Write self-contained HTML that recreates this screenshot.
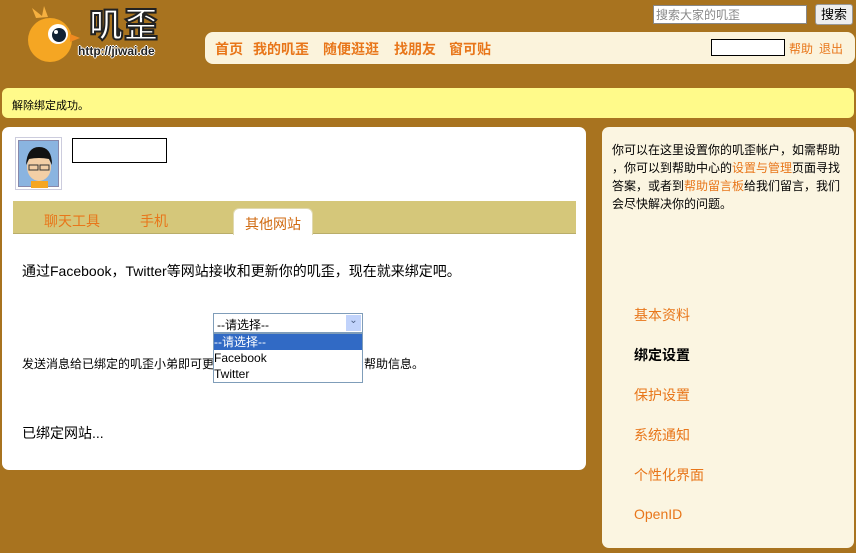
<!DOCTYPE html>
<html><head><meta charset="utf-8"><style>
*{margin:0;padding:0;box-sizing:border-box}
body{width:856px;height:553px;background:#a8731f;font-family:"Liberation Sans","Noto Sans CJK SC",sans-serif;font-size:12px;position:relative;overflow:hidden;color:#000}
.abs{position:absolute}
.nav{left:205px;top:32px;width:650px;height:32px;background:#fbf3dc;border-radius:8px}
.nav a{position:absolute;top:7px;color:#e8761a;font-weight:bold;font-size:14px;text-decoration:none}
.o{color:#e8761a}
.msg{left:2px;top:88px;width:852px;height:30px;background:#fffa8a;border-radius:6px;padding:9px 10px;font-size:11px}
.main{left:2px;top:127px;width:584px;height:343px;background:#fff;border-radius:7px}
.side{left:602px;top:127px;width:252px;height:421px;background:#fbf5e1;border-radius:7px}
.side .m{position:absolute;left:32px;font-size:14px;color:#e8761a}
</style></head><body>
<svg class="abs" style="left:22px;top:4px" width="60" height="60"><circle cx="28" cy="36" r="22" fill="#f5a623"/><circle cx="36" cy="30" r="10" fill="#fff"/><circle cx="37" cy="31" r="7" fill="#123"/><circle cx="34" cy="28" r="2" fill="#fff"/><path d="M14 14 L10 4 L20 12 L22 2 L26 13" fill="#f5b040"/><path d="M48 30 L58 34 L48 38Z" fill="#f08a20"/></svg>
<div class="abs" style="left:89px;top:6px;font-size:34px;line-height:40px;font-weight:bold;color:#fff;-webkit-text-stroke:2px #222;letter-spacing:1px">叽歪</div>
<div class="abs" style="left:78px;top:44px;font-size:12px;font-weight:bold;color:#222;text-shadow:1px 0 #fff,-1px 0 #fff,0 1px #fff,0 -1px #fff">http://jiwai.de</div>
<input class="abs" style="left:653px;top:5px;width:154px;height:19px;border:1px solid #888;font-size:12px;color:#888;padding-left:2px;font-family:inherit" value="搜索大家的叽歪">
<div class="abs" style="left:815px;top:4px;width:38px;height:21px;background:#eee;border:1px solid #999;border-radius:3px;text-align:center;line-height:19px;font-size:13px">搜索</div>
<div class="abs nav"><a style="left:10px">首页</a><a style="left:48px">我的叽歪</a><a style="left:118px">随便逛逛</a><a style="left:189px">找朋友</a><a style="left:244px">窗可贴</a>
<div class="abs" style="left:506px;top:7px;width:74px;height:17px;border:1px solid #000;background:#fff"></div>
<span class="abs o" style="left:584px;top:8px">帮助</span><span class="abs o" style="left:614px;top:8px">退出</span></div>
<div class="abs msg">解除绑定成功。</div>
<div class="abs main">
<div class="abs" style="left:13px;top:10px;width:47px;height:53px;border:1px solid #ccd;background:#fff"><div style="margin:2px;width:41px;height:47px;background:#8ab4e0;border:1px solid #88a"><svg width="41" height="47"><ellipse cx="20" cy="26" rx="12" ry="14" fill="#f3cfa6"/><path d="M7 24 Q8 6 20 6 Q33 6 33 24 L30 18 Q20 16 10 18Z" fill="#111"/><rect x="10" y="24" width="9" height="5" fill="none" stroke="#333"/><rect x="21" y="24" width="9" height="5" fill="none" stroke="#333"/><rect x="12" y="40" width="17" height="7" fill="#f5a623"/></svg></div></div>
<div class="abs" style="left:70px;top:11px;width:95px;height:25px;border:1px solid #000"></div>
<div class="abs" style="left:11px;top:74px;width:563px;height:33px;background:#d5c77a;border-bottom:1px solid #b9ad6a"></div>
<span class="abs" style="left:42px;top:84px;font-size:14px;color:#e8761a">聊天工具</span>
<span class="abs" style="left:138px;top:84px;font-size:14px;color:#e8761a">手机</span>
<div class="abs" style="left:231px;top:81px;width:80px;height:27px;background:#fff;border-radius:6px 6px 0 0;border:1px solid #e0d9b0;border-bottom:none;text-align:center;padding-top:5px;font-size:14px;color:#d06a10">其他网站</div>
<div class="abs" style="left:20px;top:134px;font-size:14px">通过Facebook，Twitter等网站接收和更新你的叽歪，现在就来绑定吧。</div>
<div class="abs" style="left:20px;top:228px;font-size:12px">发送消息给已绑定的叽歪小弟即可更<span style="position:absolute;left:342px;white-space:nowrap">帮助信息。</span></div>
<div class="abs" style="left:20px;top:296px;font-size:14px">已绑定网站...</div>
<div class="abs" style="left:211px;top:186px;width:150px;height:20px;border:1px solid #7f9db9;background:#fff;font-size:12px;padding:2px 3px">--请选择--<div class="abs" style="right:1px;top:1px;width:15px;height:16px;background:#c1d3fb;color:#4d6185;font-size:10px;text-align:center">⌄</div></div>
<div class="abs" style="left:211px;top:206px;width:150px;height:50px;border:1px solid #7f9db9;background:#fff;font-size:12px;line-height:16px">
<div style="background:#316ac5;color:#fff">--请选择--</div><div>Facebook</div><div>Twitter</div></div>
</div>
<div class="abs side">
<div style="padding:14px 12px 0 10px;font-size:12px;line-height:18px;line-break:anywhere">你可以在这里设置你的叽歪帐户，如需帮助，你可以到帮助中心的<span class="o">设置与管理</span>页面寻找答案，或者到<span class="o">帮助留言板</span>给我们留言，我们会尽快解决你的问题。</div>
<div class="m" style="top:178px">基本资料</div>
<div class="m" style="top:218px;color:#000;font-weight:bold">绑定设置</div>
<div class="m" style="top:258px">保护设置</div>
<div class="m" style="top:298px">系统通知</div>
<div class="m" style="top:338px">个性化界面</div>
<div class="m" style="top:379px">OpenID</div>
</div>
</body></html>
